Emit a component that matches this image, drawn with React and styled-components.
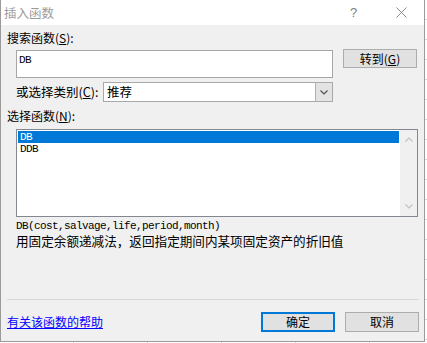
import React from "react";
import styled, { createGlobalStyle } from "styled-components";

const Global = createGlobalStyle`
  html, body { margin: 0; padding: 0; background: #ffffff; }
  body { font-family: "Noto Sans CJK SC", "Noto Sans", sans-serif; }
`;

const Screen = styled.div`
  width: 427px;
  height: 343px;
  overflow: hidden;
  display: flex;
  background-color: #ffffff;
  background-image:
    repeating-linear-gradient(to right, transparent 0 73px, #d4d9e3 73px 74px, transparent 74px 72px),
    repeating-linear-gradient(to bottom, transparent 0 19px, #d4d9e3 19px 20px);
`;

const Dialog = styled.div`
  width: 423px;
  height: 341px;
  border-left: 1px solid #9a9a9a;
  border-right: 1px solid #9a9a9a;
  border-bottom: 1px solid #9a9a9a;
  background: #f0f0f0;
  display: flex;
  flex-direction: column;
  flex: none;
`;

const TitleBar = styled.div`
  height: 25px;
  background: #ffffff;
  display: flex;
  align-items: center;
  padding-left: 3px;
  padding-right: 17px;
  box-sizing: border-box;
`;

const Title = styled.div`
  flex: 1;
  font-size: 12.5px;
  color: #9c9c9c;
  line-height: 14px;
`;

const Help = styled.div`
  width: 10px;
  font-family: "Liberation Sans", sans-serif;
  font-size: 13px;
  color: #808080;
  margin-right: 36px;
  line-height: 14px;
`;

const Body = styled.div`
  flex: 1;
  display: flex;
  flex-direction: column;
  padding: 0 5px 0 6px;
  font-size: 12px;
  color: #000;
`;

const Label = styled.div`
  margin-top: ${(p) => p.$mt}px;
  height: 14px;
  line-height: 14px;
  font-size: 12px;
  white-space: nowrap;
`;

const Row = styled.div`
  display: flex;
  align-items: ${(p) => p.$align || "center"};
  margin-top: ${(p) => p.$mt}px;
  padding-left: ${(p) => p.$pl || 0}px;
`;

const TextBox = styled.div`
  width: 317px;
  height: 28px;
  box-sizing: border-box;
  margin-top: 1px;
  border: 1px solid #a6a6a6;
  background: #fff;
  padding: 2px 2px;
  font-family: "Liberation Mono", monospace;
  font-size: 11px;
  letter-spacing: -0.6px;
  line-height: 14px;
`;

const Button = styled.div`
  width: 74px;
  height: ${(p) => p.$h || 20}px;
  box-sizing: border-box;
  margin-left: 10px;
  background: #e1e1e1;
  border: ${(p) => (p.$primary ? "2px solid #0078d7" : "1px solid #adadad")};
  display: flex;
  align-items: center;
  justify-content: center;
  font-size: 12px;
  line-height: 14px;
  white-space: nowrap;
`;

const Select = styled.div`
  width: 230px;
  height: 20px;
  box-sizing: border-box;
  border: 1px solid #a9a9a9;
  background: #fff;
  display: flex;
`;

const SelectText = styled.div`
  flex: 1;
  padding-left: 3px;
  line-height: 18px;
  font-size: 12.5px;
`;

const SelectArrow = styled.div`
  width: 16px;
  background: #e3e3e3;
  border-left: 1px solid #b0b0b0;
  display: flex;
  align-items: center;
  justify-content: center;
`;

const CatLabel = styled.div`
  width: 87px;
  font-size: 12.5px;
  line-height: 14px;
  white-space: nowrap;
`;

const ListBox = styled.div`
  margin-top: 6px;
  margin-left: 9px;
  width: 402px;
  height: 88px;
  box-sizing: border-box;
  border: 1px solid #828790;
  background: #fff;
  display: flex;
`;

const Items = styled.div`
  flex: 1;
  padding: 1px;
`;

const Item = styled.div`
  height: 12px;
  line-height: 12px;
  padding-left: 2px;
  font-family: "Liberation Mono", monospace;
  font-size: 11px;
  letter-spacing: -0.6px;
  background: ${(p) => (p.$selected ? "#0078d7" : "transparent")};
  color: ${(p) => (p.$selected ? "#fff" : "#000")};
`;

const ScrollBar = styled.div`
  width: 17px;
  background: #f0f0f0;
  display: flex;
  flex-direction: column;
  justify-content: space-between;
  align-items: center;
  padding: 7px 0 7px;
`;

const Signature = styled.div`
  margin-top: 3px;
  padding-left: 9px;
  height: 13px;
  line-height: 13px;
  font-family: "Liberation Mono", monospace;
  font-size: 11px;
  letter-spacing: -0.6px;
  white-space: nowrap;
`;

const Description = styled.div`
  margin-top: 1px;
  padding-left: 9px;
  height: 14px;
  line-height: 14px;
  font-size: 12.6px;
  white-space: nowrap;
`;

const Separator = styled.div`
  margin-top: 51px;
  height: 1px;
  background: #d6d6d6;
`;

const Footer = styled.div`
  margin-top: 12px;
  height: 20px;
  display: flex;
  align-items: center;
`;

const Link = styled.a`
  flex: 1;
  color: #0000ff;
  text-decoration: underline;
  font-size: 12px;
  line-height: 14px;
  cursor: pointer;
`;

const Chevron = ({ up, color = "#6a6a6a", w = 8, h = 5 }) => (
  <svg width={w} height={h} viewBox="0 0 8 5">
    <polyline
      points={up ? "0.5,4.5 4,1 7.5,4.5" : "0.5,0.5 4,4 7.5,0.5"}
      fill="none"
      stroke={color}
      strokeWidth="1.2"
    />
  </svg>
);

export default function App() {
  return (
    <>
      <Global />
      <Screen>
        <Dialog>
          <TitleBar>
            <Title>插入函数</Title>
            <Help>?</Help>
            <svg width="11" height="11" viewBox="0 0 11 11">
              <path d="M0.5 0.5 L10.5 10.5 M10.5 0.5 L0.5 10.5" stroke="#8a8a8a" strokeWidth="1" />
            </svg>
          </TitleBar>
          <Body>
            <Label $mt={6}>
              搜索函数(<u>S</u>):
            </Label>
            <Row $mt={4} $pl={9} $align="flex-start">
              <TextBox>DB</TextBox>
              <Button $h={19}>
                转到(<u>G</u>)
              </Button>
            </Row>
            <Row $mt={4} $pl={9}>
              <CatLabel>
                或选择类别(<u>C</u>):
              </CatLabel>
              <Select>
                <SelectText>推荐</SelectText>
                <SelectArrow>
                  <Chevron color="#505050" />
                </SelectArrow>
              </Select>
            </Row>
            <Label $mt={7}>
              选择函数(<u>N</u>):
            </Label>
            <ListBox>
              <Items>
                <Item $selected>DB</Item>
                <Item>DDB</Item>
              </Items>
              <ScrollBar>
                <Chevron up color="#c2c2c2" />
                <Chevron color="#c2c2c2" />
              </ScrollBar>
            </ListBox>
            <Signature>DB(cost,salvage,life,period,month)</Signature>
            <Description>用固定余额递减法，返回指定期间内某项固定资产的折旧值</Description>
            <Separator />
            <Footer>
              <Link>有关该函数的帮助</Link>
              <Button $primary>确定</Button>
              <Button>取消</Button>
            </Footer>
          </Body>
        </Dialog>
      </Screen>
    </>
  );
}
